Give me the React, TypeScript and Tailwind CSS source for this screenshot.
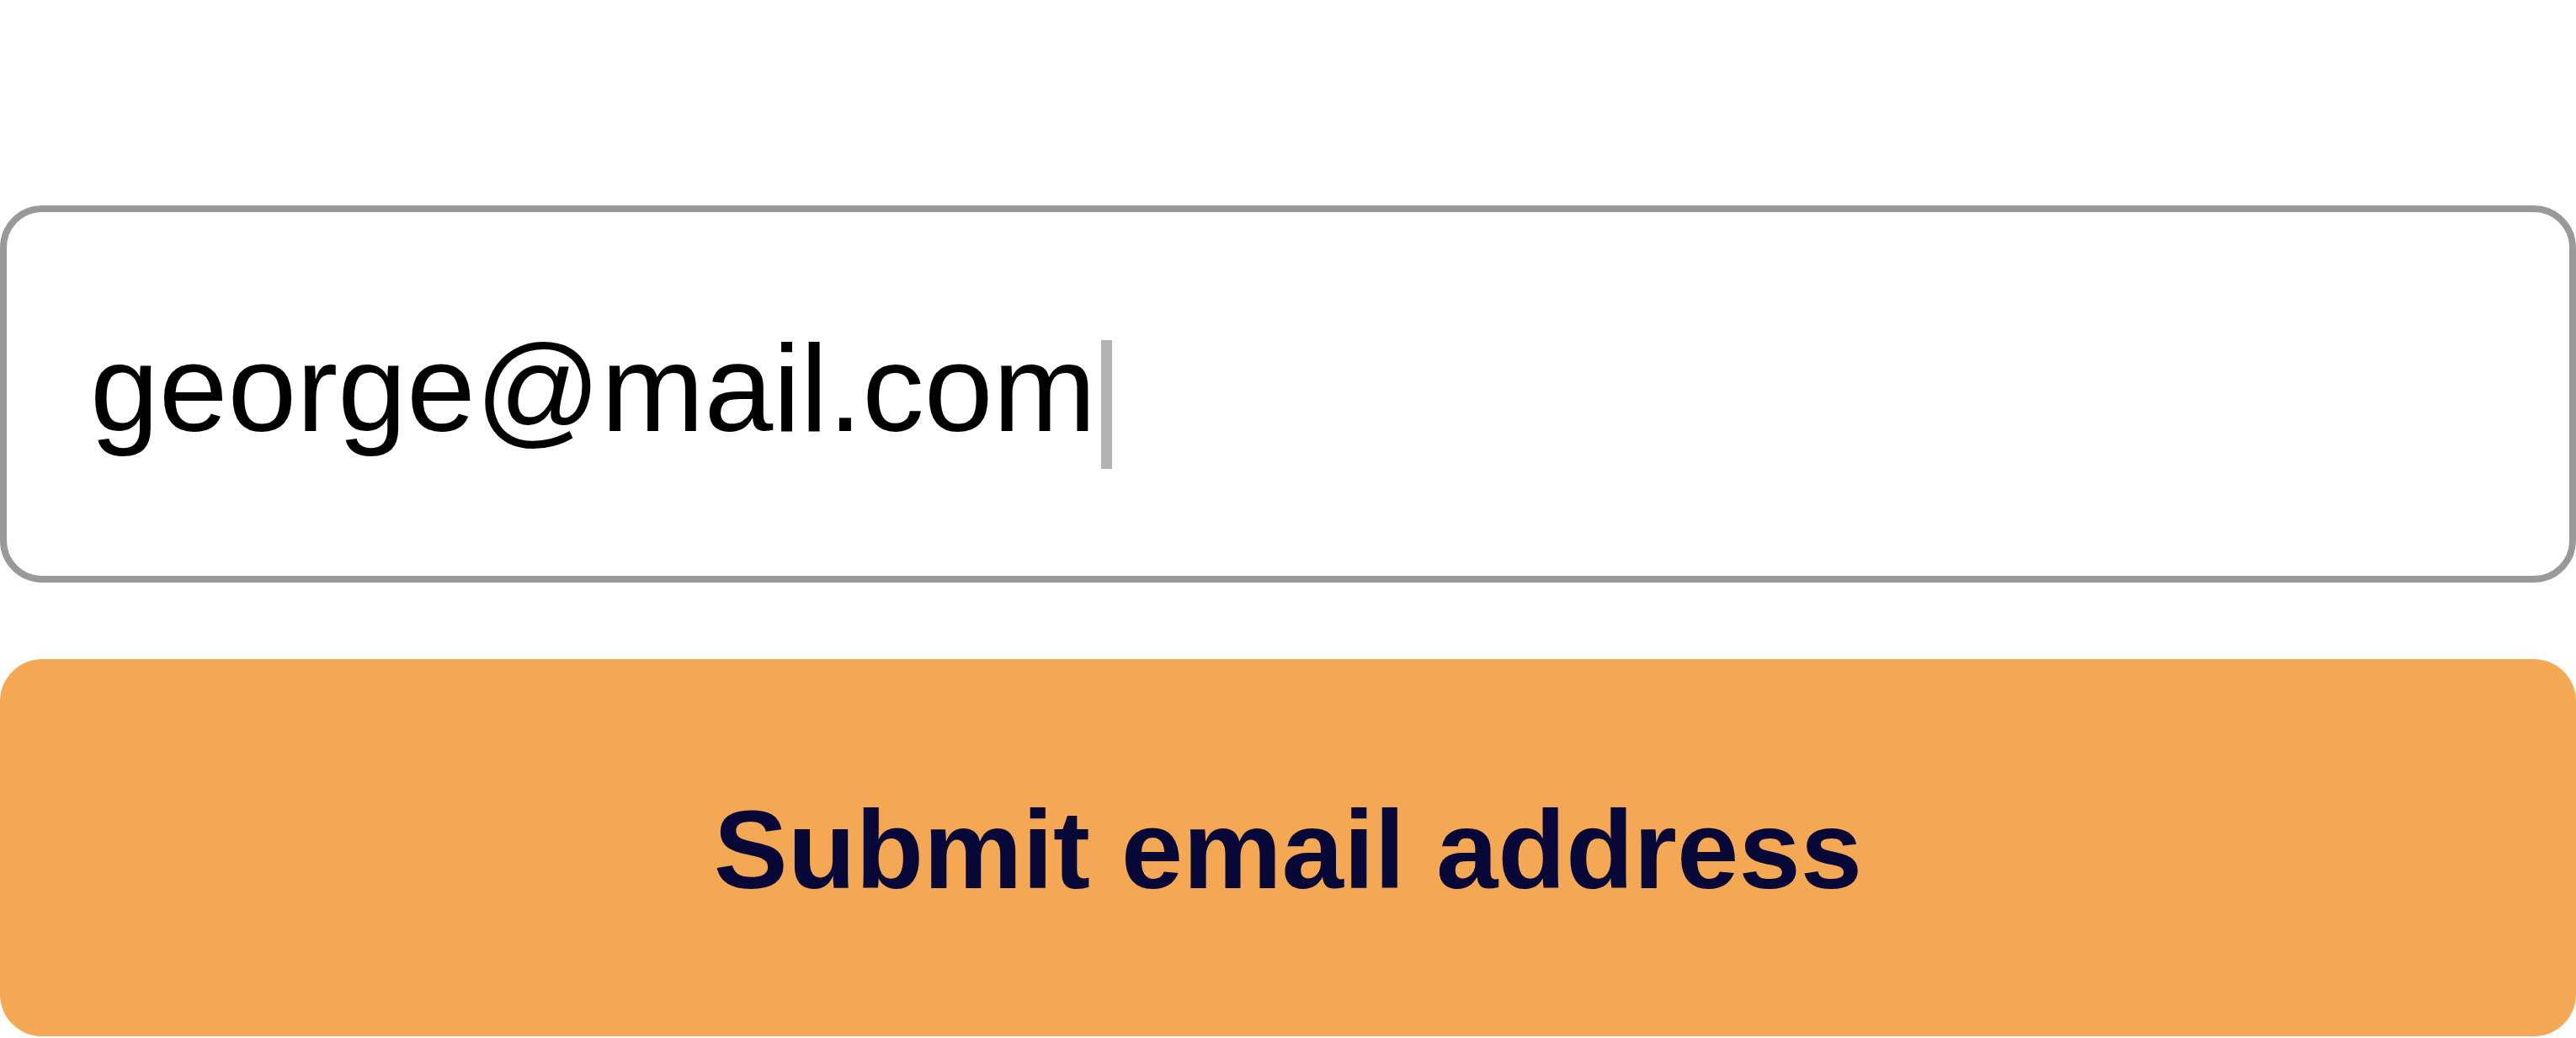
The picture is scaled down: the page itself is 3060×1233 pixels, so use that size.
export default function App() {
  return (
    <div className="min-h-screen bg-white pt-[244px] font-['Liberation_Sans',Arial,sans-serif]">
      {/* email field, shown in its focused state with a drawn caret */}
      <div className="flex h-[448px] items-center rounded-[50px] border-[8px] border-[#999999] bg-white pl-[99px]">
        <span className="mb-[13px] text-[147px] leading-none text-black">george@mail.com</span>
        <span className="ml-[6px] mt-[25px] h-[153px] w-[13px] bg-[#b3b3b3]" aria-hidden />
      </div>

      <button
        type="button"
        className="mt-[91px] flex h-[448px] w-full items-center justify-center rounded-[50px] bg-[#f5a853] pt-[6px] text-[132px] font-bold leading-none text-[#070838]"
      >
        Submit email address
      </button>
    </div>
  );
}
